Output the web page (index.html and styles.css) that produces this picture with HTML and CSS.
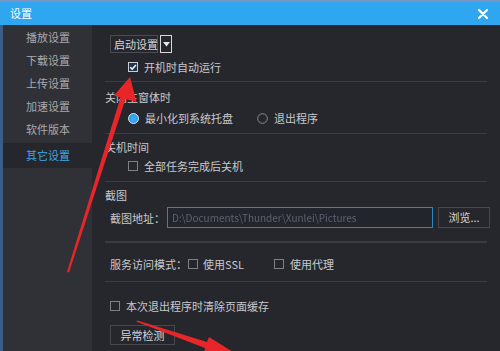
FILE: index.html
```html
<!DOCTYPE html>
<html lang="zh">
<head>
<meta charset="utf-8">
<link rel="stylesheet" href="styles.css">
</head>
<body>
<div class="screen">
  <div class="topstrip"></div>
  <div class="titlebar">
    <span class="title">设置</span>
    <svg class="close" width="10" height="10" viewBox="0 0 10 10"><path d="M1 1L9 9M9 1L1 9" stroke="#fff" stroke-width="2.2" stroke-linecap="round"/></svg>
  </div>
  <div class="main">
    <div class="sidebar">
      <div class="nav">播放设置</div>
      <div class="nav">下载设置</div>
      <div class="nav">上传设置</div>
      <div class="nav">加速设置</div>
      <div class="nav">软件版本</div>
      <div class="nav active">其它设置</div>
    </div>
    <div class="content">
      <div class="row r-drop">
        <div class="select">启动设置</div>
        <div class="select-btn"><svg width="7" height="5" viewBox="0 0 7 5"><path d="M0 0H7L3.5 4.5Z" fill="#e8e8e8"/></svg></div>
      </div>
      <div class="row sub r-autorun">
        <span class="cb checked"><svg width="10" height="10" viewBox="0 0 10 10"><rect x="0.5" y="0.5" width="9" height="9" fill="#23344c" stroke="#c9ccd2"/><path d="M2.2 5.2L4.2 7.1L7.9 2.9" fill="none" stroke="#e9f3ff" stroke-width="1.5"/></svg></span>
        <span class="lbl">开机时自动运行</span>
      </div>
      <div class="sep s1"></div>
      <div class="row head r-close">关闭主窗体时</div>
      <div class="row sub r-radio">
        <span class="radio on"><svg width="11" height="11" viewBox="0 0 11 11"><circle cx="5.5" cy="5.5" r="5" fill="#2f9ff0" stroke="#d7e6f4" stroke-width="1"/><circle cx="5.5" cy="5.5" r="2.6" fill="#3aa8f5"/></svg></span>
        <span class="lbl">最小化到系统托盘</span>
        <span class="radio off"><svg width="11" height="11" viewBox="0 0 11 11"><circle cx="5.5" cy="5.5" r="4.8" fill="none" stroke="#8a8c92" stroke-width="1"/></svg></span>
        <span class="lbl">退出程序</span>
      </div>
      <div class="sep s2"></div>
      <div class="row head r-shut">关机时间</div>
      <div class="row sub r-shutcb">
        <span class="cb"></span>
        <span class="lbl">全部任务完成后关机</span>
      </div>
      <div class="sep s3"></div>
      <div class="row head r-shot">截图</div>
      <div class="row item r-path">
        <span class="lbl plabel">截图地址：</span>
        <div class="input"><span class="ptext">D:\Documents\Thunder\Xunlei\Pictures</span></div>
        <div class="btn browse">浏览...</div>
      </div>
      <div class="sep s4"></div>
      <div class="row item r-svc">
        <span class="lbl">服务访问模式：</span>
        <span class="cb"></span>
        <span class="lbl">使用SSL</span>
        <span class="cb cb-proxy"></span>
        <span class="lbl">使用代理</span>
      </div>
      <div class="sep s5"></div>
      <div class="row item r-cache">
        <span class="cb"></span>
        <span class="lbl">本次退出程序时清除页面缓存</span>
      </div>
      <div class="row item r-btn">
        <div class="btn check">异常检测</div>
      </div>
    </div>
  </div>
  <svg class="arrows" width="500" height="351" viewBox="0 0 500 351">
    <polygon points="67,272 69,272.5 125.5,99 136.5,102 130,77 114,95.5 120.5,97.5" fill="#e8262a"/>
    <polygon points="136,321.5 137.5,320.5 207,342 209,337 233,352 204,356 205,348" fill="#e8262a"/>
  </svg>
</div>
</body>
</html>
```
FILE: styles.css
```css
html, body {
  margin: 0;
  padding: 0;
  background: #25272d;
}
.screen {
  position: relative;
  width: 500px;
  height: 351px;
  overflow: hidden;
  font-family: "Noto Sans CJK SC", "Noto Sans", sans-serif;
  font-size: 11px;
  color: #c8c9cc;
}
.topstrip {
  height: 2px;
  background: #7d93c4;
}
.titlebar {
  height: 23px;
  background: #2fa7f0;
  display: flex;
  align-items: center;
  justify-content: space-between;
  padding: 0 12px 0 10px;
  color: #fff;
}
.title {
  font-size: 11px;
  line-height: 23px;
}
.main {
  display: flex;
  height: 326px;
}
.sidebar {
  flex: none;
  width: 89px;
  border-left: 3px solid #3c5e86;
  background: #2f3137;
  padding-top: 1px;
  box-sizing: content-box;
}
.nav {
  height: 23px;
  line-height: 23px;
  padding-left: 23px;
  color: #a9aaad;
}
.nav.active {
  margin-top: 2px;
  height: 25px;
  line-height: 25px;
  background: #25272d;
  color: #3ea6e6;
}
.content {
  flex: 1;
  min-width: 0;
  background: #25272d;
  padding: 10px 13px 0 13px;
  display: flex;
  flex-direction: column;
}
.row {
  display: flex;
  align-items: center;
  height: 18px;
  white-space: nowrap;
}
.head { padding-left: 0; }
.sub { padding-left: 23px; }
.item { padding-left: 5px; }
.sep {
  height: 1px;
  background: #3b3d43;
  flex: none;
}
.r-drop { height: 18px; padding-left: 5px; }
.select {
  height: 16px;
  line-height: 16px;
  width: 43px;
  padding-left: 3px;
  border: 1px solid #4a4c52;
  color: #d4d5d8;
}
.select-btn {
  margin-left: 2px;
  width: 10px;
  height: 16px;
  border: 1px solid #d8d8da;
  display: flex;
  align-items: center;
  justify-content: center;
}
.r-autorun { margin-top: 4px; height: 20px; }
.s1 { margin-top: 4px; }
.r-close { margin-top: 5px; height: 20px; }
.r-radio { margin-top: 1px; height: 20px; }
.s2 { margin-top: 5px; }
.r-shut { margin-top: 4px; }
.r-shutcb { margin-top: 1px; }
.s3 { margin-top: 6px; }
.r-shot { margin-top: 4px; }
.r-path { margin-top: 3px; height: 21px; }
.s4 { margin-top: 13px; height: 2px; background: #393b41; }
.r-svc { margin-top: 12px; }
.s5 { margin-top: 8px; }
.r-cache { margin-top: 15px; }
.r-btn { margin-top: 10px; height: 19px; }

.cb {
  width: 8px;
  height: 8px;
  border: 1px solid #7e8086;
  flex: none;
  margin-right: 6px;
}
.cb.checked {
  border: none;
  width: 10px;
  height: 10px;
  display: flex;
  margin-right: 6px;
}
.radio {
  display: flex;
  width: 11px;
  height: 11px;
  margin-right: 6px;
}
.radio.off { margin-left: 24px; }
.lbl { line-height: 18px; }
.r-svc .cb { margin-left: 1px; margin-right: 5px; }
.r-svc .cb-proxy { margin-left: 30px; margin-right: 6px; }
.plabel { width: 57px; flex: none; }
.input {
  flex: none;
  width: 260px;
  height: 19px;
  border: 1px solid #2a86bd;
  background: #22252c;
  display: flex;
  align-items: center;
  padding-left: 4px;
  box-sizing: content-box;
  overflow: hidden;
}
.ptext {
  color: #5b6270;
  font-size: 10px;
  filter: blur(0.6px);
}
.btn {
  flex: none;
  border: 1px solid #46484e;
  height: 19px;
  line-height: 19px;
  text-align: center;
  color: #d6d7da;
}
.browse {
  margin-left: 5px;
  width: 50px;
}
.check {
  width: 63px;
  height: 18px;
  line-height: 18px;
}
.arrows {
  position: absolute;
  left: 0;
  top: 0;
  pointer-events: none;
}
```
